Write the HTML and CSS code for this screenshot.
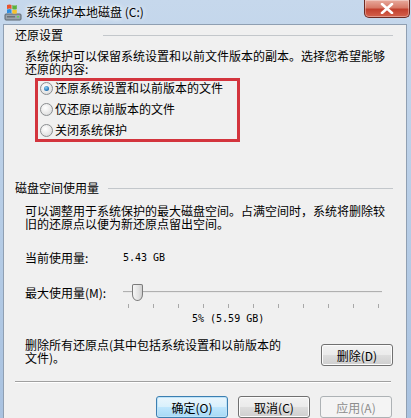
FILE: index.html
```html
<!DOCTYPE html>
<html lang="zh-CN">
<head>
    <meta charset="UTF-8">
    <title>系统保护本地磁盘 (C:)</title>
    <link rel="stylesheet" href="styles.css">
</head>
<body>
    <div class="window">
        <div class="titlebar">
            <svg class="app-icon" width="18" height="18" viewBox="0 0 18 18">
                <rect x="1" y="11" width="16" height="6" rx="1" fill="#9aa3ab" stroke="#5d666e"/>
                <rect x="3" y="13" width="8" height="1.5" fill="#6a737b"/>
                <rect x="13" y="13" width="2" height="1.5" fill="#5fd35f"/>
                <path d="M3 2 q2.5 -1 4.5 0 v4 q-2 -1 -4.5 0z" fill="#e8542e"/>
                <path d="M8.3 2 q2.5 1 4.5 0 v4 q-2 1 -4.5 0z" fill="#5bb13b"/>
                <path d="M3 6.6 q2.5 -1 4.5 0 v3.6 q-2 -1 -4.5 0z" fill="#2f8fe0"/>
                <path d="M8.3 6.6 q2.5 1 4.5 0 v3.6 q-2 1 -4.5 0z" fill="#f5c12c"/>
            </svg>
            <span class="title">系统保护本地磁盘 (C:)</span>
            <div class="close">
                <svg width="14" height="11" viewBox="0 0 14 11">
                    <path d="M2 1 L12 10 M12 1 L2 10" stroke="#fff" stroke-width="2.6" stroke-linecap="round"/>
                </svg>
            </div>
        </div>

        <div class="client">
            <div class="group-head">
                <span>还原设置</span>
                <i class="rule wide"></i>
            </div>
            <p class="desc">系统保护可以保留系统设置和以前文件版本的副本。选择您希望能够<br>还原的内容:</p>

            <div class="options">
                <div class="option"><span class="radio checked"></span>还原系统设置和以前版本的文件</div>
                <div class="option"><span class="radio"></span>仅还原以前版本的文件</div>
                <div class="option"><span class="radio"></span>关闭系统保护</div>
            </div>

            <div class="group-head disk">
                <span>磁盘空间使用量</span>
                <i class="rule"></i>
            </div>
            <p class="desc desc-disk">可以调整用于系统保护的最大磁盘空间。占满空间时，系统将删除较<br>旧的还原点以便为新还原点留出空间。</p>

            <div class="usage">
                <span>当前使用量:</span>
                <span class="mono">5.43 GB</span>
            </div>

            <div class="usage max">
                <span>最大使用量(M):</span>
                <div class="slider">
                    <i class="track"></i>
                    <i class="thumb"></i>
                </div>
            </div>
            <div class="ticks">
                <i></i><i></i><i></i><i></i><i></i><i></i><i></i><i></i><i></i><i></i><i></i>
            </div>
            <div class="percent mono">5% (5.59 GB)</div>

            <div class="delete-row">
                <p>删除所有还原点(其中包括系统设置和以前版本的<br>文件)。</p>
                <button class="btn">删除(D)</button>
            </div>

            <hr class="separator">

            <div class="actions">
                <button class="btn default">确定(O)</button>
                <button class="btn">取消(C)</button>
                <button class="btn" disabled>应用(A)</button>
            </div>
        </div>
    </div>
</body>
</html>
```

FILE: styles.css
```css
* {
    box-sizing: border-box;
}

body {
    margin: 0;
    font-family: "Noto Sans CJK SC", "DejaVu Sans", sans-serif;
    font-size: 12px;
    color: #000;
}

.window {
    width: 411px;
    height: 418px;
    display: flex;
    flex-direction: column;
    background: linear-gradient(#c6d8ec, #b4cbe5 60%, #a9c2e0);
    padding: 0 4px 0 3px;
    overflow: hidden;
}

.titlebar {
    height: 24px;
    display: flex;
    align-items: center;
    padding-left: 1px;
    flex-shrink: 0;
}

.app-icon {
    margin-right: 4px;
}

.title {
    font-size: 12px;
    line-height: 14px;
    margin-top: -1px;
    text-shadow: 0 0 6px #fff, 0 0 4px #fff;
}

.close {
    margin-left: auto;
    align-self: flex-start;
    width: 46px;
    height: 18px;
    margin-right: -3px;
    border: 1px solid #6d2a22;
    border-top: none;
    border-radius: 0 0 5px 5px;
    background: linear-gradient(#e8aa9d, #d77a68 45%, #c2402e 55%, #d4624c);
    box-shadow: inset 0 0 0 1px rgba(255,255,255,0.35);
    display: flex;
    align-items: center;
    justify-content: center;
}

.client {
    flex: 1;
    background: #f0f0f0;
    border: 1px solid #8f9fb2;
    border-bottom: none;
    padding: 4px 13px 0 11px;
}

.group-head {
    display: flex;
    align-items: center;
    height: 12px;
    line-height: 12px;
}

.rule {
    flex: 1;
    border-top: 1px solid #c3c7cb;
    margin-left: 9px;
}

.rule.wide {
    margin-left: 40px;
}

.desc {
    margin: 8px 0 0 10px;
    line-height: 13px;
}

.options {
    margin: 3px 0 0 20px;
    width: 205px;
    border: 3px solid #d3343d;
    padding: 0 0 2px 2px;
    display: flex;
    flex-direction: column;
    gap: 7px;
}

.option {
    height: 14px;
    display: flex;
    align-items: center;
    gap: 2px;
    line-height: 14px;
}

.radio {
    width: 13px;
    height: 13px;
    border-radius: 50%;
    border: 1px solid #8b8e91;
    background: radial-gradient(circle at 40% 35%, #ffffff, #e6e6e6 60%, #cfd2d4);
    display: flex;
    align-items: center;
    justify-content: center;
}

.radio.checked::after {
    content: "";
    width: 5px;
    height: 5px;
    border-radius: 50%;
    background: radial-gradient(circle at 40% 35%, #8fd2f5, #1d6fb4 70%, #0c4f8c);
}

.group-head.disk {
    margin-top: 40px;
}

.desc-disk {
    margin-top: 10px;
}

.usage {
    display: grid;
    grid-template-columns: 98px 1fr;
    align-items: center;
    margin: 22px 0 0 10px;
    line-height: 12px;
}

.usage.max {
    margin-top: 20px;
    height: 18px;
}

.mono {
    font-family: "DejaVu Sans Mono", "Liberation Mono", monospace;
    font-size: 10px;
    letter-spacing: 0;
}

.slider {
    position: relative;
    height: 18px;
    margin-right: 11px;
}

.track {
    position: absolute;
    left: 0;
    right: 0;
    top: 7px;
    border-top: 1px solid #b0b0b0;
    border-bottom: 1px solid #e8e8e8;
}

.thumb {
    position: absolute;
    left: 9px;
    top: 0;
    width: 11px;
    height: 17px;
    border: 1px solid #7b7b7b;
    border-radius: 2px 2px 6px 6px / 2px 2px 7px 7px;
    background: linear-gradient(90deg, #f6f6f6, #e3e3e3 60%, #cfcfcf);
}

.ticks {
    display: flex;
    justify-content: space-between;
    width: 251px;
    margin: 2px 0 0 113px;
    height: 4px;
}

.ticks i {
    width: 1px;
    height: 4px;
    background: #a8a8a8;
}

.percent {
    margin: 5px 0 0 177px;
    line-height: 12px;
    height: 12px;
}

.delete-row {
    display: flex;
    justify-content: space-between;
    align-items: flex-start;
    margin: 13px 0 0 10px;
}

.delete-row p {
    margin: 0;
    line-height: 13px;
}

.delete-row .btn {
    margin-top: 6px;
}

.btn {
    width: 72px;
    height: 22px;
    padding: 0;
    font-family: "Noto Sans CJK SC", sans-serif;
    font-size: 12px;
    color: #000;
    border: 1px solid #707070;
    border-radius: 3px;
    background: linear-gradient(#f2f2f2, #ebebeb 48%, #dddddd 52%, #cfcfcf);
    box-shadow: inset 0 0 0 1px #fcfcfc;
}

.btn.default {
    border-color: #3c7fb1;
    background: linear-gradient(#eaf6fd, #d9f0fc 48%, #bee6fd 52%, #a7d9f5);
    box-shadow: inset 0 0 0 1px #bfe3f8;
}

.btn:disabled {
    color: #8d8d8d;
    border-color: #adb2b5;
    background: #f4f4f4;
    box-shadow: none;
}

.separator {
    margin: 15px 2px 0 0;
    border: none;
    border-top: 1px solid #a0a0a0;
    border-bottom: 1px solid #fff;
}

.actions {
    display: flex;
    justify-content: flex-end;
    gap: 10px;
    margin: 13px 1px 0 0;
}
```
